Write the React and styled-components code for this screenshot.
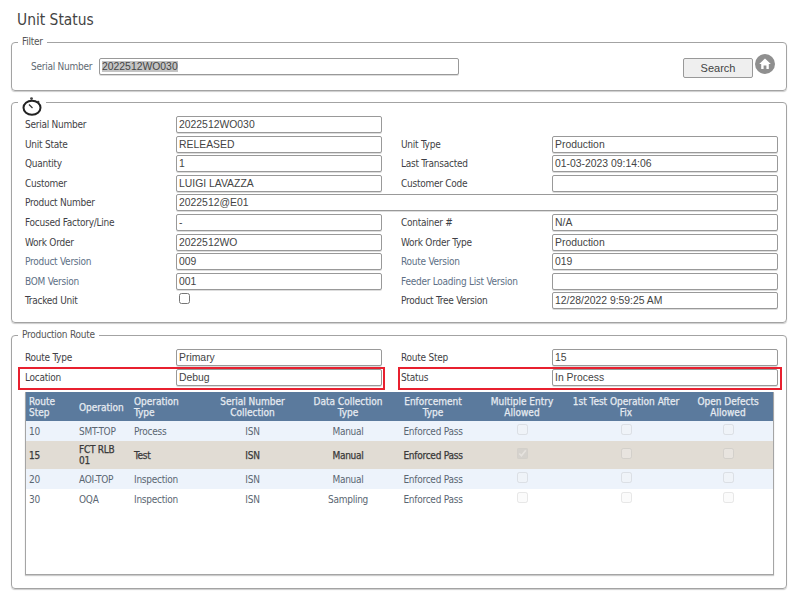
import React from 'react';
import styled, {createGlobalStyle} from 'styled-components';

const Global = createGlobalStyle`
  html, body {
    margin: 0;
    padding: 0;
    background: #fff;
  }
  body {
    font-family: "DejaVu Sans Condensed", "DejaVu Sans", sans-serif;
    font-stretch: condensed;
    font-size: 10px;
    letter-spacing: -0.25px;
    color: #3b3b3b;
  }
`

const Page = styled.div`
  width: 799px;
  height: 594px;
  box-sizing: border-box;
  padding: 12px 12px 0 11px;
  overflow: hidden;
`

const Title = styled.h1`
  margin: 0 0 8px 6px;
  height: 17px;
  line-height: 17px;
  font-size: 15.4px;
  font-weight: 400;
  letter-spacing: 0;
  color: #444;
`

const Panel = styled.fieldset`
  margin: 0 0 ${props => props.gap || 0}px;
  padding: 0 8px 0 13px;
  height: ${props => props.h}px;
  box-sizing: border-box;
  border: 1px solid #a3a3a3;
  border-radius: 4px;
  box-shadow: 0 1px 1px #ccc;
  min-width: 0;
`

const Legend = styled.legend`
  margin-left: -7px;
  padding: 0 4px;
  height: 10px;
  line-height: 10px;
  color: #555;
`

const FilterRow = styled.div`
  display: flex;
  align-items: flex-start;
  padding-top: 11px;
`

const FilterLabel = styled.label`
  width: 74px;
  padding-left: 6px;
  box-sizing: border-box;
  line-height: 17.6px;
  color: #5f6a72;
  white-space: nowrap;
`

const Input = styled.div`
  box-sizing: border-box;
  height: 17px;
  width: ${props => props.w ? props.w + 'px' : 'auto'};
  padding: 0 2px;
  border: 1px solid #999;
  border-radius: 2px;
  background: #fff;
  font-family: "Liberation Sans", Arial, sans-serif;
  font-stretch: normal;
  font-size: 10.4px;
  letter-spacing: 0;
  line-height: 15px;
  color: #444;
  box-shadow: 0 1px 0 #ddd;
  white-space: nowrap;
`

const Selected = styled.span`
  background: #c4c4c4;
`

const Search = styled.button`
  margin-left: auto;
  width: 70px;
  height: 20px;
  padding: 0;
  border: 1px solid #999;
  border-radius: 2px;
  background: #efefef;
  font-family: "Liberation Sans", Arial, sans-serif;
  font-size: 11px;
  color: #444;
`

const HomeIcon = styled.svg`
  display: block;
  width: 20px;
  height: 20px;
  margin: -4px 3px 0 2px;
`

const WatchLegend = styled.legend`
  margin-left: -7px;
  padding: 0 4px;
  height: 10px;
  line-height: 0;
`

const FormGrid = styled.div`
  display: grid;
  grid-template-columns: 151px 206px 19px 151px 226px;
  grid-auto-rows: 19.6px;
  margin-top: 9px;
`

const Label = styled.div`
  grid-column: ${props => props.col || 'auto'};
  line-height: 17.6px;
  color: ${props => props.muted ? '#5d6f85' : '#3f3f46'};
  white-space: nowrap;
`

const Wide = styled(Input)`
  grid-column: 2 / 6;
`

const Tick = styled.input`
  display: block;
  margin: 1px 0 0 3px;
  width: 11px;
  height: 11px;
`

const Marked = styled.div`
  position: relative;
  grid-column: ${props => props.col};
  display: grid;
  grid-template-columns: ${props => props.cols};
  &::after {
    content: "";
    position: absolute;
    top: -2px;
    bottom: -2px;
    left: ${props => props.l}px;
    right: ${props => props.r}px;
    border: 2px solid #e8202f;
    pointer-events: none;
  }
`

const TableBox = styled.div`
  width: 749px;
  height: 183px;
  margin-top: 3.8px;
  box-sizing: border-box;
  border: 1px solid #a5a5a5;
  border-width: 0 1px 1px 1px;
  box-shadow: 0 1px 1px #ccc;
`

const Table = styled.table`
  width: 747px;
  table-layout: fixed;
  border-collapse: collapse;
`

const Th = styled.th`
  height: 29px;
  padding: 2px 3px 0;
  box-sizing: border-box;
  background: #5b7a9d;
  color: #e6ebf1;
  font-size: 10px;
  letter-spacing: 0;
  line-height: 11px;
  font-weight: 400;
  -webkit-text-stroke: 0.25px #e6ebf1;
  text-align: ${props => props.left ? 'left' : 'center'};
`

const Tr = styled.tr`
  background: ${props => props.bg || '#fff'};
`

const Td = styled.td`
  height: ${props => props.tall ? 28 : 20}px;
  padding: 1px 3px 0;
  box-sizing: border-box;
  font-size: 10px;
  line-height: 11.5px;
  white-space: pre-line;
  color: ${props => props.tall ? '#3a3a3a' : '#5a6672'};
  -webkit-text-stroke: ${props => props.tall ? '0.25px #3a3a3a' : '0'};
  text-align: ${props => props.left ? 'left' : 'center'};
`

const CheckCell = styled.td`
  padding: 0;
  vertical-align: middle;
`

const RowCheck = styled.input`
  display: block;
  margin: 0 auto 3px;
  width: 11px;
  height: 11px;
  opacity: 0.5;
`

const widths = [50, 55, 69, 105, 86, 84, 94, 114, 90];

const rows = [
  ['Unit State', 'RELEASED', 'Unit Type', 'Production'],
  ['Quantity', '1', 'Last Transacted', '01-03-2023 09:14:06'],
  ['Customer', 'LUIGI LAVAZZA', 'Customer Code', ''],
];

const rowsBelow = [
  ['Focused Factory/Line', ' -', 'Container #', 'N/A'],
  ['Work Order', '2022512WO', 'Work Order Type', 'Production'],
  ['Product Version', '009', 'Route Version', '019', true],
  ['BOM Version', '001', 'Feeder Loading List Version', '', true],
];

const steps = [
  {step: '10', op: 'SMT-TOP', type: 'Process', data: 'Manual', bg: '#edf3fb'},
  {step: '15', op: 'FCT RLB\n01', type: 'Test', data: 'Manual', bg: '#e1dcd4', tall: true, checked: true},
  {step: '20', op: 'AOI-TOP', type: 'Inspection', data: 'Manual', bg: '#edf3fb'},
  {step: '30', op: 'OQA', type: 'Inspection', data: 'Sampling'},
];

function App() {
  return (
    <Page>
      <Global />
      <Title>Unit Status</Title>
      <Panel h={54} gap={6}>
        <Legend>Filter</Legend>
        <FilterRow>
          <FilterLabel>Serial Number</FilterLabel>
          <Input w={360}><Selected>2022512WO030</Selected></Input>
          <Search>Search</Search>
          <HomeIcon viewBox="0 0 20 20">
            <circle cx="10" cy="10" r="10" fill="#8f8f8f" />
            <path d="M10 4.5 L15.8 10 H13.8 V15 H11.4 V11.6 H8.6 V15 H6.2 V10 H4.2 Z" fill="#fff" />
          </HomeIcon>
        </FilterRow>
      </Panel>

      <Panel h={226} gap={7}>
        <WatchLegend>
          <svg width="20" height="20" viewBox="0 0 20 20">
            <ellipse cx="10" cy="10.8" rx="8.5" ry="7" fill="none" stroke="#222" strokeWidth="2" />
            <circle cx="9.5" cy="1.6" r="1.4" fill="#444" />
            <path d="M15.5 4 L17.2 5.6" stroke="#333" strokeWidth="1.6" fill="none" />
            <path d="M10.5 11 L7 7.5" stroke="#333" strokeWidth="1.2" />
          </svg>
        </WatchLegend>
        <FormGrid>
          <Label>Serial Number</Label>
          <Input>2022512WO030</Input>
          <div />
          <div />
          <div />
          {rows.map(r => (
            <React.Fragment key={r[0]}>
              <Label col="1">{r[0]}</Label>
              <Input>{r[1]}</Input>
              <Label col="4">{r[2]}</Label>
              <Input>{r[3]}</Input>
            </React.Fragment>
          ))}
          <Label col="1">Product Number</Label>
          <Wide>2022512@E01</Wide>
          {rowsBelow.map(r => (
            <React.Fragment key={r[0]}>
              <Label col="1" muted={r[4]}>{r[0]}</Label>
              <Input>{r[1]}</Input>
              <Label col="4" muted={r[4]}>{r[2]}</Label>
              <Input>{r[3]}</Input>
            </React.Fragment>
          ))}
          <Label col="1">Tracked Unit</Label>
          <div><Tick type="checkbox" readOnly /></div>
          <Label col="4">Product Tree Version</Label>
          <Input>12/28/2022 9:59:25 AM</Input>
        </FormGrid>
      </Panel>

      <Panel h={259}>
        <Legend>Production Route</Legend>
        <FormGrid>
          <Label col="1">Route Type</Label>
          <Input>Primary</Input>
          <Label col="4">Route Step</Label>
          <Input>15</Input>
          <Marked col="1 / 3" cols="151px 206px" l={-7} r={-3}>
            <Label>Location</Label>
            <Input>Debug</Input>
          </Marked>
          <Marked col="4 / 6" cols="151px 226px" l={-3} r={-4}>
            <Label>Status</Label>
            <Input>In Process</Input>
          </Marked>
        </FormGrid>
        <TableBox>
          <Table>
            <colgroup>
              {widths.map((w, i) => <col key={i} style={{width: w}} />)}
            </colgroup>
            <thead>
              <tr>
                <Th left>Route Step</Th>
                <Th left>Operation</Th>
                <Th left>Operation Type</Th>
                <Th>Serial Number Collection</Th>
                <Th>Data Collection Type</Th>
                <Th>Enforcement Type</Th>
                <Th>Multiple Entry Allowed</Th>
                <Th>1st Test Operation After Fix</Th>
                <Th>Open Defects Allowed</Th>
              </tr>
            </thead>
            <tbody>
              {steps.map(s => (
                <Tr key={s.step} bg={s.bg}>
                  <Td left tall={s.tall}>{s.step}</Td>
                  <Td left tall={s.tall}>{s.op}</Td>
                  <Td left tall={s.tall}>{s.type}</Td>
                  <Td tall={s.tall}>ISN</Td>
                  <Td tall={s.tall}>{s.data}</Td>
                  <Td tall={s.tall}>Enforced Pass</Td>
                  <CheckCell><RowCheck type="checkbox" disabled checked={!!s.checked} readOnly /></CheckCell>
                  <CheckCell><RowCheck type="checkbox" disabled /></CheckCell>
                  <CheckCell><RowCheck type="checkbox" disabled /></CheckCell>
                </Tr>
              ))}
            </tbody>
          </Table>
        </TableBox>
      </Panel>
    </Page>
  );
}

export default App;
